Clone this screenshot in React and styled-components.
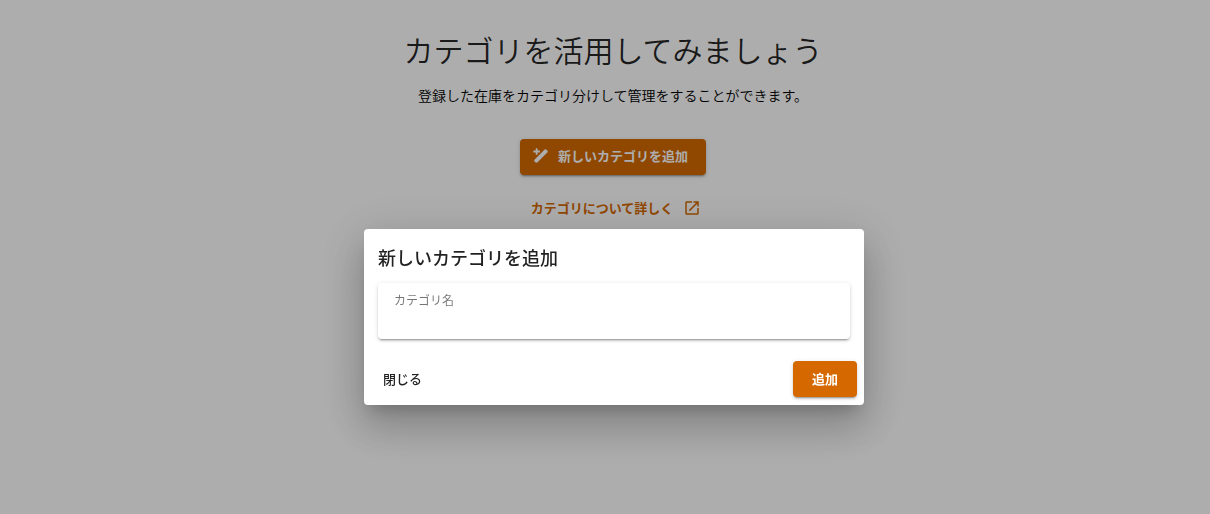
import styled, { createGlobalStyle } from "styled-components";

const GlobalStyle = createGlobalStyle`
  * {
    box-sizing: border-box;
  }

  body {
    margin: 0;
    background: #fff;
    color: rgba(0, 0, 0, 0.87);
    font-family: "Noto Sans CJK JP", sans-serif;
  }

  button,
  input {
    font-family: inherit;
  }
`;

const StyledPage = styled.main`
  min-height: 100vh;
  display: flex;
  flex-direction: column;
  align-items: center;
  padding: 27px 0 0 16px;
`;

const StyledHeading = styled.h1`
  margin: 0;
  font-size: 30px;
  font-weight: 350;
  line-height: 44px;
`;

const StyledLead = styled.p`
  margin: 14px 0 34px;
  color: #000;
  font-size: 14px;
  font-weight: 350;
  line-height: 20px;
`;

const StyledButton = styled.button`
  height: 36px;
  display: flex;
  align-items: center;
  gap: 8px;
  padding: ${(props) => props.$pad || "0 12px"};
  border: 0;
  border-radius: 4px;
  background: ${(props) => (props.$text ? "transparent" : "#d56900")};
  box-shadow: ${(props) =>
    props.$text
      ? "none"
      : "0 3px 1px -2px rgba(0, 0, 0, 0.2), 0 2px 2px rgba(0, 0, 0, 0.14), 0 1px 5px rgba(0, 0, 0, 0.12)"};
  color: ${(props) => (props.$text ? "inherit" : "#fff")};
  font-size: 13px;
  font-weight: ${(props) => (props.$text ? 500 : 700)};
  line-height: 20px;
  cursor: pointer;
`;

const StyledLink = styled.a`
  display: flex;
  align-items: center;
  gap: 10px;
  margin-top: 23px;
  padding-left: 6px;
  color: #d56900;
  font-size: 13px;
  font-weight: 700;
  line-height: 20px;
  text-decoration: none;
`;

const StyledIcon = styled.svg`
  width: 18px;
  height: 18px;
  fill: currentColor;
`;

const Overlay = styled.div`
  position: fixed;
  inset: 0;
  display: flex;
  align-items: center;
  justify-content: center;
  padding: 120px 0 0 18px;
  background: rgba(0, 0, 0, 0.32);
`;

const StyledDialog = styled.section`
  width: 100%;
  max-width: 500px;
  border-radius: 4px;
  background: #fff;
  box-shadow:
    0 11px 15px -7px rgba(0, 0, 0, 0.2),
    0 24px 38px 3px rgba(0, 0, 0, 0.14),
    0 9px 46px 8px rgba(0, 0, 0, 0.12);
`;

const StyledForm = styled.form`
  display: flex;
  flex-direction: column;
`;

const StyledTitle = styled.h2`
  margin: 0;
  padding: 15px 14px 13px;
  font-size: 18px;
  font-weight: 500;
  line-height: 26px;
`;

const StyledField = styled.div`
  height: 56px;
  display: flex;
  flex-direction: column;
  margin: 0 14px;
  padding: 8px 16px;
  border-radius: 4px;
  box-shadow:
    0 3px 1px -2px rgba(0, 0, 0, 0.2),
    0 2px 2px rgba(0, 0, 0, 0.14),
    0 1px 5px rgba(0, 0, 0, 0.12);
`;

const StyledLabel = styled.label`
  color: rgba(0, 0, 0, 0.54);
  font-size: 12px;
  line-height: 18px;
`;

const StyledInput = styled.input`
  width: 100%;
  height: 22px;
  padding: 0;
  border: 0;
  outline: 0;
  background: transparent;
  font-size: 16px;
`;

const StyledActions = styled.div`
  display: flex;
  justify-content: space-between;
  padding: 22px 7px 8px;
`;

function PencilPlusIcon() {
  return (
    <StyledIcon viewBox="0 0 24 24" aria-hidden="true">
      <path d="M20.4 7.4C21.2 6.6 21.2 5.6 20.4 4.8L19.2 3.6C18.4 2.8 17.4 2.8 16.6 3.6L14.9 5.3L18.7 9.1ZM14.9 5.3L3.6 16.6C2.8 17.4 2.8 18.6 3.6 19.6L4.4 20.4C5.4 21.2 6.6 21.2 7.4 20.4L18.7 9.1ZM7.4 1.6V4.8H10.6V7.2H7.4V10.4H5V7.2H1.8V4.8H5V1.6Z" />
    </StyledIcon>
  );
}

function OpenInNewIcon() {
  return (
    <StyledIcon viewBox="0 0 24 24" aria-hidden="true">
      <path d="M14 3V5H17.59L7.76 14.83L9.17 16.24L19 6.41V10H21V3M19 19H5V5H12V3H5C3.89 3 3 3.9 3 5V19A2 2 0 0 0 5 21H19A2 2 0 0 0 21 19V12H19V19Z" />
    </StyledIcon>
  );
}

function CategoryDialog() {
  return (
    <Overlay>
      <StyledDialog role="dialog" aria-modal="true" aria-labelledby="dialog-title">
        <StyledForm onSubmit={(e) => e.preventDefault()}>
          <StyledTitle id="dialog-title">新しいカテゴリを追加</StyledTitle>
          <StyledField>
            <StyledLabel htmlFor="category-name">カテゴリ名</StyledLabel>
            <StyledInput id="category-name" type="text" />
          </StyledField>
          <StyledActions>
            <StyledButton type="button" $text>
              閉じる
            </StyledButton>
            <StyledButton type="submit" $pad="0 19px">
              追加
            </StyledButton>
          </StyledActions>
        </StyledForm>
      </StyledDialog>
    </Overlay>
  );
}

function App() {
  return (
    <>
      <GlobalStyle />
      <StyledPage>
        <StyledHeading>カテゴリを活用してみましょう</StyledHeading>
        <StyledLead>
          登録した在庫をカテゴリ分けして管理をすることができます。
        </StyledLead>
        <StyledButton type="button" $pad="0 18px 2px 12px">
          <PencilPlusIcon />
          新しいカテゴリを追加
        </StyledButton>
        <StyledLink href="#about">
          カテゴリについて詳しく
          <OpenInNewIcon />
        </StyledLink>
      </StyledPage>
      <CategoryDialog />
    </>
  );
}

export default App;
